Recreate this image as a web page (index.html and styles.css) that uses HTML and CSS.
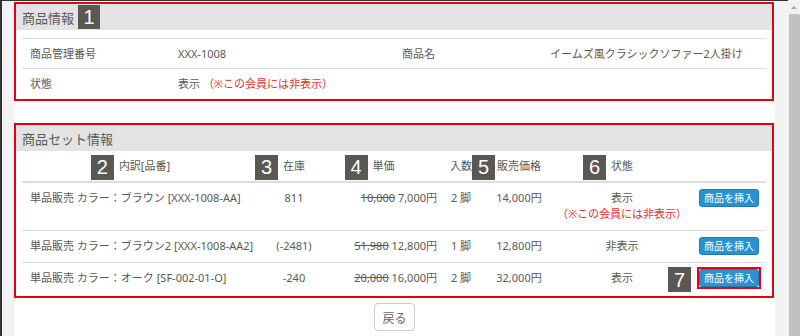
FILE: index.html
```html
<!DOCTYPE html>
<html lang="ja">
<head>
    <meta charset="UTF-8" />
    <meta name="viewport" content="width=device-width, initial-scale=1.0"/>
    <title>商品セット</title>
    <link rel="stylesheet" href="styles.css">
</head>
<body>
<div class="frame">
    <div class="viewport">
        <div class="page">
            <section class="panel">
                <h3 class="panel-head">商品情報 <span class="num">1</span></h3>
                <table class="info">
                    <colgroup>
                        <col style="width:148px">
                        <col style="width:224px">
                        <col style="width:148px">
                        <col>
                    </colgroup>
                    <tr>
                        <td>商品管理番号</td>
                        <td>XXX-1008</td>
                        <td>商品名</td>
                        <td>イームズ風クラシックソファー2人掛け</td>
                    </tr>
                    <tr>
                        <td>状態</td>
                        <td>表示 <span class="note">（※この会員には非表示）</span></td>
                        <td></td>
                        <td></td>
                    </tr>
                </table>
            </section>

            <section class="panel panel-set">
                <h3 class="panel-head">商品セット情報</h3>
                <table class="set">
                    <colgroup>
                        <col style="width:245px">
                        <col style="width:54px">
                        <col style="width:125px">
                        <col style="width:30px">
                        <col style="width:86px">
                        <col style="width:120px">
                        <col>
                    </colgroup>
                    <thead>
                    <tr>
                        <th><span class="hd"><span class="num tag">2</span>内訳[品番]</span></th>
                        <th><span class="hd"><span class="num tag">3</span>在庫</span></th>
                        <th><span class="hd"><span class="num tag">4</span>単価</span></th>
                        <th class="c-qty">入数</th>
                        <th><span class="hd"><span class="num tag tag-tight">5</span>販売価格</span></th>
                        <th><span class="hd"><span class="num tag">6</span>状態</span></th>
                        <th></th>
                    </tr>
                    </thead>
                    <tbody>
                    <tr>
                        <td class="c-name">単品販売 カラー：ブラウン [XXX-1008-AA]</td>
                        <td>811</td>
                        <td class="c-price"><s>10,000</s> 7,000円</td>
                        <td class="c-qty">2 脚</td>
                        <td>14,000円</td>
                        <td>表示<span class="note note-block">（※この会員には非表示）</span></td>
                        <td class="c-op"><button class="btn-insert">商品を挿入</button></td>
                    </tr>
                    <tr>
                        <td class="c-name">単品販売 カラー：ブラウン2 [XXX-1008-AA2]</td>
                        <td>(-2481)</td>
                        <td class="c-price"><s>51,980</s> 12,800円</td>
                        <td class="c-qty">1 脚</td>
                        <td>12,800円</td>
                        <td>非表示</td>
                        <td class="c-op"><button class="btn-insert">商品を挿入</button></td>
                    </tr>
                    <tr>
                        <td class="c-name">単品販売 カラー：オーク [SF-002-01-O]</td>
                        <td>-240</td>
                        <td class="c-price"><s>20,000</s> 16,000円</td>
                        <td class="c-qty">2 脚</td>
                        <td>32,000円</td>
                        <td>表示</td>
                        <td class="c-op">
                            <span class="hd"><span class="num tag tag-btn">7</span><span class="marked"><button class="btn-insert">商品を挿入</button></span></span>
                        </td>
                    </tr>
                    </tbody>
                </table>
            </section>

            <div class="actions">
                <button class="btn-back">戻る</button>
            </div>
        </div>
    </div>
    <div class="scrollbar">
        <div class="arrow"></div>
        <div class="thumb"></div>
    </div>
</div>
</body>
</html>
```

FILE: styles.css
```css
body {
    margin: 0;
    font-family: "Noto Sans", "Noto Sans CJK JP", sans-serif;
    font-size: 11px;
    color: #595959;
}

.frame {
    display: flex;
    height: 336px;
    overflow: hidden;
}

.viewport {
    flex: 1;
    background-color: #f2f2f2;
    border-left: 2px solid #333;
    border-top: 1px solid #333;
    padding: 0 13px 0 12px;
}

.page {
    display: flow-root;
    background-color: #fff;
    height: 100%;
}

.panel {
    border: 2px solid #e60012;
    margin: 1px 1px 0 0;
    padding-bottom: 1px;
}

.panel-set {
    margin-top: 22px;
    padding-bottom: 2px;
}

.panel-head {
    display: flex;
    align-items: center;
    gap: 4px;
    height: 26px;
    margin: 0;
    padding-left: 6px;
    background-color: #e3e3e3;
    font-size: 13px;
    font-weight: normal;
}

.num {
    display: inline-flex;
    align-items: center;
    justify-content: center;
    width: 23px;
    height: 25px;
    background-color: #5a5853;
    color: #fff;
    font-family: "Liberation Sans", Arial, sans-serif;
    font-size: 20px;
    line-height: 1;
}

.panel-head .num {
    width: 22px;
    height: 24px;
}

.note {
    color: #e8322e;
}

table {
    width: calc(100% - 12px);
    margin: 0 6px;
    border-collapse: collapse;
    table-layout: fixed;
}

td, th {
    white-space: nowrap;
    line-height: 17px;
}

.info {
    margin-top: 8px;
    border-top: 1px solid #ddd;
}

.info td {
    padding: 6px 8px;
}

.info tr:first-child td {
    border-bottom: 1px solid #ddd;
}

.set th {
    padding: 6px 8px 7px;
    border-bottom: 2px solid #ddd;
    font-weight: normal;
    text-align: center;
}

.set td {
    padding: 6px 8px 8px;
    text-align: center;
    vertical-align: top;
    border-bottom: 1px solid #ddd;
}

.set tr:last-child td {
    border-bottom: none;
}

.set .c-name {
    text-align: left;
}

.set .c-price {
    text-align: right;
    padding-right: 9px;
}

.set .c-qty {
    padding-left: 0;
    padding-right: 0;
}

.set .c-op {
    text-align: right;
    padding: 6px 7px 7px 0;
}

.note-block {
    display: block;
    margin: 0 -14px;
    line-height: 16px;
}

.hd {
    position: relative;
    display: inline-block;
}

.tag {
    position: absolute;
    right: 100%;
    top: 50%;
    margin-top: -11px;
    margin-right: 5px;
}

.tag-tight {
    margin-right: 2px;
}

.tag-btn {
    top: -2px;
    margin-top: 0;
    margin-right: 6px;
}

.btn-insert {
    display: inline-block;
    vertical-align: top;
    box-sizing: border-box;
    height: 18px;
    padding: 0 4px;
    border: 1px solid #2479b3;
    border-radius: 3px;
    background-color: #2b91d3;
    color: #fff;
    font-family: "Noto Sans CJK JP", sans-serif;
    font-size: 10px;
    line-height: 16px;
    cursor: pointer;
}

.marked {
    display: inline-block;
    vertical-align: top;
    margin: -2px -2px -2px 0;
    border: 2px solid #e60012;
    line-height: 0;
}

.actions {
    text-align: center;
    margin-top: 5px;
}

.btn-back {
    width: 41px;
    height: 28px;
    padding: 0;
    border: 1px solid #ccc;
    border-radius: 4px;
    background-color: #fff;
    color: #666;
    font-family: "Noto Sans CJK JP", sans-serif;
    font-size: 12px;
    cursor: pointer;
}

.scrollbar {
    display: flex;
    flex-direction: column;
    width: 12px;
    background-color: #f1f1f1;
}

.arrow {
    width: 0;
    height: 0;
    margin: 6px auto 5px;
    border-left: 3px solid transparent;
    border-right: 3px solid transparent;
    border-bottom: 3px solid #a3a3a3;
}

.thumb {
    flex: 1;
    margin-left: 1px;
    background-color: #c1c1c1;
}
```
